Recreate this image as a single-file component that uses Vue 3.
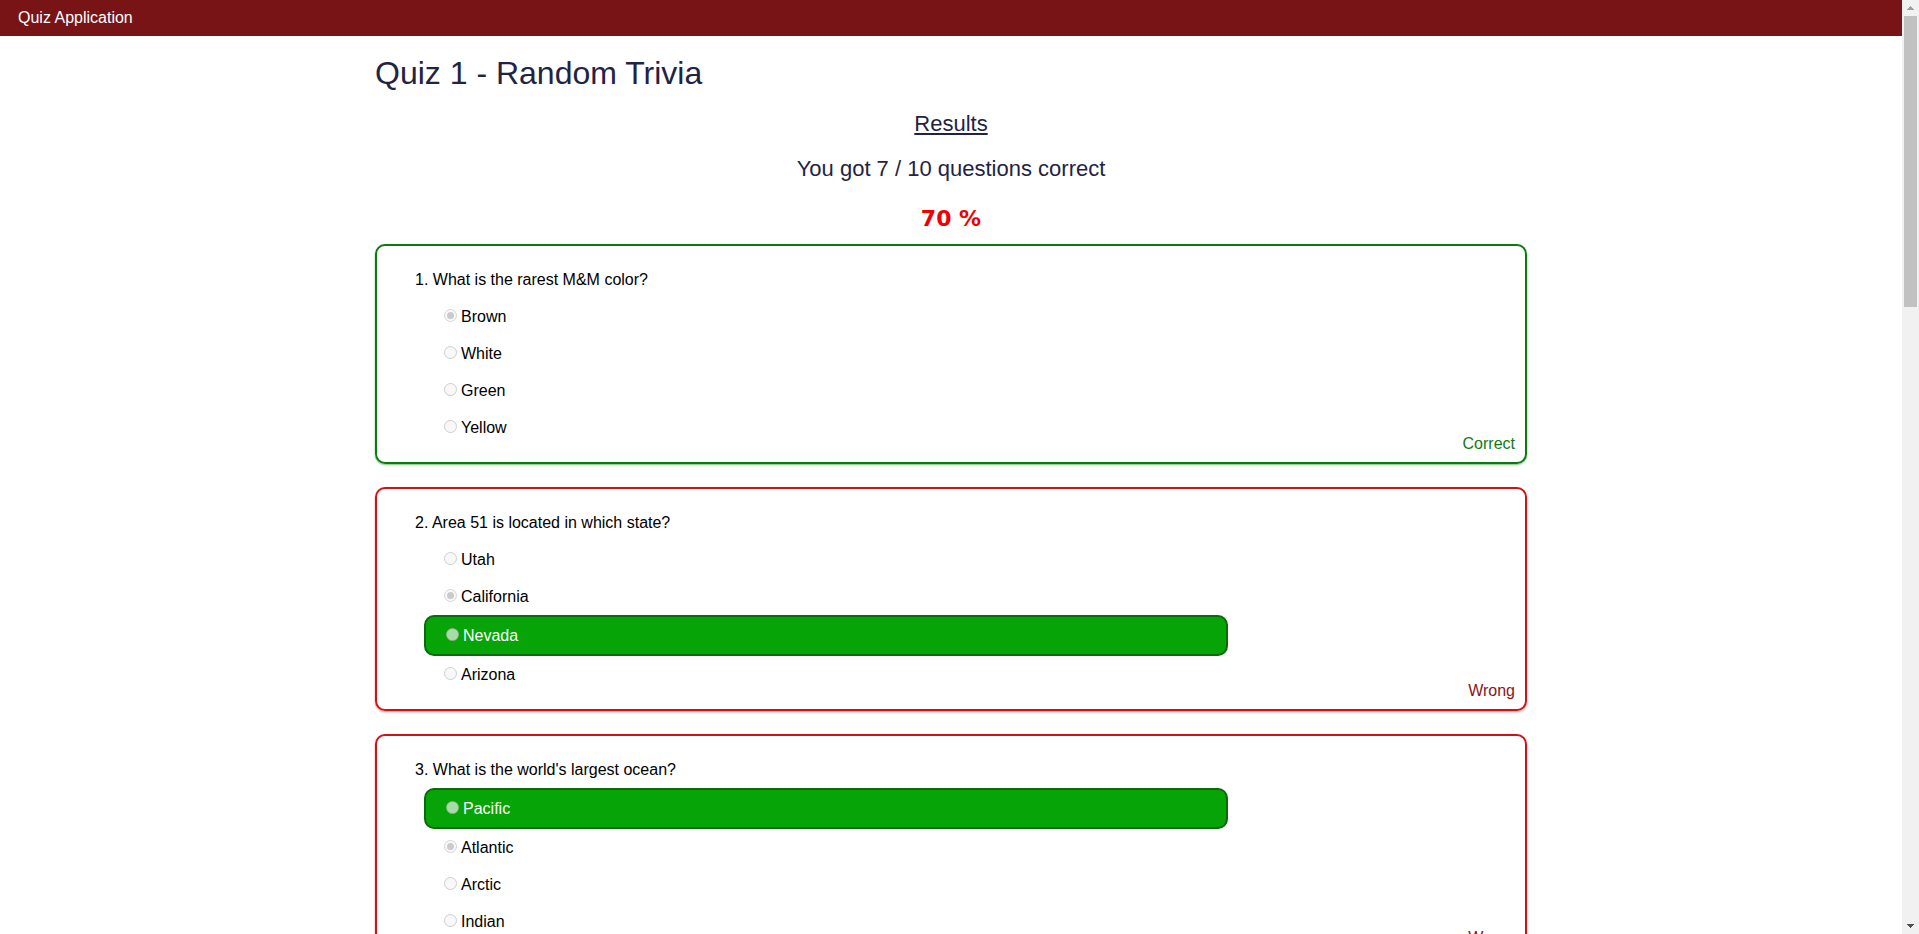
<script setup>
const questions = [
  {
    text: 'What is the rarest M&M color?',
    options: ['Brown', 'White', 'Green', 'Yellow'],
    chosen: 0,
    answer: 0,
  },
  {
    text: 'Area 51 is located in which state?',
    options: ['Utah', 'California', 'Nevada', 'Arizona'],
    chosen: 1,
    answer: 2,
  },
  {
    text: "What is the world's largest ocean?",
    options: ['Pacific', 'Atlantic', 'Arctic', 'Indian'],
    chosen: 1,
    answer: 0,
  },
]

const isCorrect = (q) => q.chosen === q.answer
</script>

<template>
  <div class="window">
    <div class="page">
      <header class="navbar">
        <a class="brand" href="#">Quiz Application</a>
      </header>

      <main class="container">
        <h1 class="title">Quiz 1 - Random Trivia</h1>

        <section class="summary">
          <h2 class="results">Results</h2>
          <p class="score">You got 7 / 10 questions correct</p>
          <p class="percent">70 %</p>
        </section>

        <section
          v-for="(q, qi) in questions"
          :key="qi"
          class="card"
          :class="isCorrect(q) ? 'card-correct' : 'card-wrong'"
        >
          <fieldset class="question" disabled>
            <legend class="question-text">{{ qi + 1 }}. {{ q.text }}</legend>
            <label
              v-for="(option, oi) in q.options"
              :key="oi"
              class="option"
              :class="{ solution: !isCorrect(q) && oi === q.answer }"
            >
              <input
                class="radio"
                type="radio"
                :name="'question-' + qi"
                :value="option"
                :checked="oi === q.chosen"
                disabled
              />
              <span>{{ option }}</span>
            </label>
          </fieldset>
          <p class="status">{{ isCorrect(q) ? 'Correct' : 'Wrong' }}</p>
        </section>
      </main>
    </div>

    <div class="scrollbar" aria-hidden="true">
      <svg class="arrow" viewBox="0 0 17 16" shape-rendering="crispEdges">
        <path d="M5 10h7v-1h-1v-1h-1v-1h-1v-1h-1v1h-1v1h-1v1h-1z" fill="#a0a0a0" />
      </svg>
      <div class="track"><div class="thumb"></div></div>
      <svg class="arrow" viewBox="0 0 17 16" shape-rendering="crispEdges">
        <path d="M5 6h7v1h-1v1h-1v1h-1v1h-1v-1h-1v-1h-1v-1h-1z" fill="#505050" />
      </svg>
    </div>
  </div>
</template>

<style>
body {
  margin: 0;
  background: #fff;
}
</style>

<style scoped>
.window {
  display: grid;
  grid-template-columns: minmax(0, 1fr) 17px;
  height: 100vh;
  overflow: hidden;
  font-family: Arial, 'Liberation Sans', sans-serif;
  font-size: 16px;
  line-height: 19px;
  color: #000;
}

.page {
  overflow: hidden;
}

.navbar {
  padding: 8px 18px 9px;
  background: #781416;
}

.brand {
  display: block;
  color: #fff;
  text-decoration: none;
}

.container {
  max-width: 1152px;
  margin: 0 auto;
}

.title {
  margin: 19px 0;
  font-size: 32px;
  font-weight: 400;
  line-height: 37px;
  color: #1f2344;
}

.summary {
  display: flex;
  flex-direction: column;
  gap: 20px;
  margin-bottom: 13px;
  text-align: center;
  font-size: 22px;
  line-height: 25px;
  color: #1f2344;
}

.results {
  margin: 0;
  font-size: 22px;
  font-weight: 400;
  text-decoration: underline;
}

.score {
  margin: 0;
}

.percent {
  margin: 5px 0 0;
  font-family: 'Arial Black', 'DejaVu Sans', sans-serif;
  font-weight: 900;
  color: #f00000;
}

.card {
  display: grid;
  box-sizing: border-box;
  margin-bottom: 23px;
  padding: 24px 0 9px;
  border: 2px solid;
  border-radius: 10px;
}

.card-correct {
  border-color: #0b7a10;
  box-shadow: 0 1px 2px rgba(0, 128, 0, 0.5);
}

.card-wrong {
  border-color: #cb1518;
  box-shadow: 0 1px 2px rgba(255, 0, 0, 0.5);
}

.question {
  grid-area: 1 / 1;
  min-width: 0;
  margin: 0;
  padding: 0 0 7px;
  border: 0;
}

.question-text {
  padding: 0 38px 9px;
}

.option {
  display: flex;
  gap: 4px;
  box-sizing: border-box;
  width: 70%;
  margin-left: 47px;
  padding: 9px 20px;
}

.solution {
  border: 2px solid #0a6a0c;
  border-radius: 10px;
  background: #06a406;
  color: #fff;
}

.radio {
  flex: none;
  width: 13px;
  height: 13px;
  margin: 2px 0 0;
}

.radio:checked {
  appearance: none;
  box-sizing: border-box;
  padding: 2px;
  border: 1px solid #d4d4d4;
  border-radius: 50%;
  background: #f9f9f9;
}

.radio:checked::before {
  content: '';
  display: block;
  height: 100%;
  border-radius: 50%;
  background: #cbcbcb;
}

.status {
  grid-area: 1 / 1;
  place-self: end;
  margin: 0 10px 0 0;
}

.card-correct .status {
  color: #0f7a14;
}

.card-wrong .status {
  color: #8b1416;
}

.scrollbar {
  display: flex;
  flex-direction: column;
  background: #f1f1f1;
}

.arrow {
  display: block;
  flex: none;
  width: 17px;
  height: 16px;
}

.track {
  flex: 1;
  padding: 0 2px;
}

.thumb {
  height: 32.3%;
  background: #c1c1c1;
}
</style>
